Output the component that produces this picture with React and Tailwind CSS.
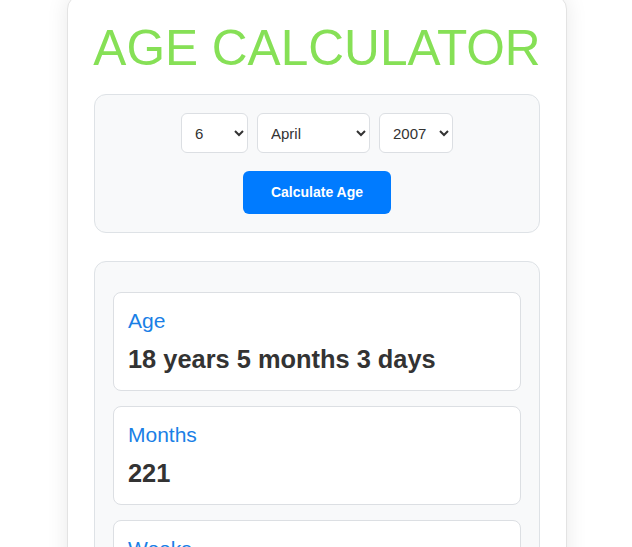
import React, { useState } from 'react'

const months = [
    'January', 'February', 'March', 'April', 'May', 'June',
    'July', 'August', 'September', 'October', 'November', 'December'
]

function ResultCard({ label, value }) {
    return (
        <div className="bg-white border border-[#dcdfe3] rounded-[8px] px-[14px] py-[16px]">
            <h3 className="text-[21px] leading-[24px] text-[#1a7fe6] font-normal mb-[12px]">
                {label}
            </h3>
            <p className="text-[25.4px] leading-[29px] font-bold text-[#333]">{value}</p>
        </div>
    )
}

export default function App() {
    const [day, setDay] = useState('6')
    const [month, setMonth] = useState('April')
    const [year, setYear] = useState('2007')

    const years = []
    for (let y = 2025; y >= 1950; y--) years.push(y)

    return (
        <div
            className="min-h-[547px] bg-white"
            style={{ fontFamily: '"Liberation Sans", Arial, sans-serif' }}
        >
            <div className="w-[500px] ml-[67px] -mt-[5px] bg-white border border-[#e3e3e3] rounded-[14px] shadow-[0_0_22px_rgba(0,0,0,0.09)] px-[26px] pt-[24px] pb-8">
                <h1 className="text-center whitespace-nowrap -mx-[10px] text-[49.6px] leading-[56px] text-[#86e056] font-normal mb-[18px]">
                    AGE CALCULATOR
                </h1>

                <div className="bg-[#f8f9fa] border border-[#dee2e6] rounded-[12px] py-[18px] flex flex-col items-center gap-[18px]">
                    <div className="flex gap-[9px]">
                        <select
                            value={day}
                            onChange={(e) => setDay(e.target.value)}
                            className="w-[67px] h-[40px] pl-[9px] pr-[6px] bg-white border border-[#dcdfe3] rounded-[6px] text-[15px] text-[#333]"
                        >
                            {Array.from({ length: 31 }, (_, i) => (
                                <option key={i + 1} value={String(i + 1)}>{i + 1}</option>
                            ))}
                        </select>
                        <select
                            value={month}
                            onChange={(e) => setMonth(e.target.value)}
                            className="w-[113px] h-[40px] pl-[9px] pr-[6px] bg-white border border-[#dcdfe3] rounded-[6px] text-[15px] text-[#333]"
                        >
                            {months.map((m) => (
                                <option key={m} value={m}>{m}</option>
                            ))}
                        </select>
                        <select
                            value={year}
                            onChange={(e) => setYear(e.target.value)}
                            className="w-[74px] h-[40px] pl-[9px] pr-[6px] bg-white border border-[#dcdfe3] rounded-[6px] text-[15px] text-[#333]"
                        >
                            {years.map((y) => (
                                <option key={y} value={String(y)}>{y}</option>
                            ))}
                        </select>
                    </div>
                    <button className="w-[148px] h-[43px] bg-[#007bff] text-white text-[14px] font-bold rounded-[6px]">
                        Calculate Age
                    </button>
                </div>

                <div className="mt-[28px] bg-[#f8f9fa] border border-[#dee2e6] rounded-[12px] pt-[30px] px-[18px] pb-[18px] flex flex-col gap-[15px]">
                    <ResultCard label="Age" value="18 years 5 months 3 days" />
                    <ResultCard label="Months" value="221" />
                    <ResultCard label="Weeks" value="961" />
                    <ResultCard label="Days" value="6731" />
                </div>
            </div>
        </div>
    )
}
